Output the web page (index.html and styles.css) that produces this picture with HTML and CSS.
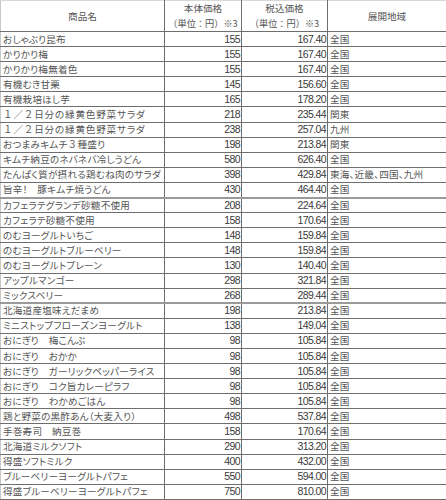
FILE: index.html
```html
<!DOCTYPE html>
<html lang="ja">
<head>
<meta charset="utf-8">
<title>商品一覧</title>
<link rel="stylesheet" href="styles.css">
</head>
<body>
<table class="sheet">
  <colgroup>
    <col class="c-name">
    <col class="c-price">
    <col class="c-tax">
    <col class="c-area">
  </colgroup>
  <thead>
    <tr class="head">
      <th>商品名</th>
      <th><span class="l1">本体価格</span><span class="l2">（単位：円）※3</span></th>
      <th><span class="l1">税込価格</span><span class="l2">（単位：円）※3</span></th>
      <th>展開地域</th>
    </tr>
  </thead>
  <tbody>
    <tr><td>おしゃぶり昆布</td><td class="num">155</td><td class="num">167.40</td><td>全国</td></tr>
    <tr><td>かりかり梅</td><td class="num">155</td><td class="num">167.40</td><td>全国</td></tr>
    <tr><td>かりかり梅無着色</td><td class="num">155</td><td class="num">167.40</td><td>全国</td></tr>
    <tr><td>有機むき甘栗</td><td class="num">145</td><td class="num">156.60</td><td>全国</td></tr>
    <tr><td>有機栽培ほし芋</td><td class="num">165</td><td class="num">178.20</td><td>全国</td></tr>
    <tr><td class="wide"><span class="fw">１／２</span>日分の緑黄色野菜サラダ</td><td class="num">218</td><td class="num">235.44</td><td>関東</td></tr>
    <tr><td class="wide"><span class="fw">１／２</span>日分の緑黄色野菜サラダ</td><td class="num">238</td><td class="num">257.04</td><td>九州</td></tr>
    <tr><td>おつまみキムチ<span class="fw">３</span>種盛り</td><td class="num">198</td><td class="num">213.84</td><td>関東</td></tr>
    <tr><td>キムチ納豆のネバネバ冷しうどん</td><td class="num">580</td><td class="num">626.40</td><td>全国</td></tr>
    <tr><td>たんぱく質が摂れる鶏むね肉のサラダ</td><td class="num">398</td><td class="num">429.84</td><td>東海、近畿、四国、九州</td></tr>
    <tr><td>旨辛！　豚キムチ焼うどん</td><td class="num">430</td><td class="num">464.40</td><td>全国</td></tr>
    <tr class="thick"><td>カフェラテグランデ砂糖不使用</td><td class="num">208</td><td class="num">224.64</td><td>全国</td></tr>
    <tr><td>カフェラテ砂糖不使用</td><td class="num">158</td><td class="num">170.64</td><td>全国</td></tr>
    <tr><td>のむヨーグルトいちご</td><td class="num">148</td><td class="num">159.84</td><td>全国</td></tr>
    <tr><td>のむヨーグルトブルーベリー</td><td class="num">148</td><td class="num">159.84</td><td>全国</td></tr>
    <tr><td>のむヨーグルトプレーン</td><td class="num">130</td><td class="num">140.40</td><td>全国</td></tr>
    <tr><td>アップルマンゴー</td><td class="num">298</td><td class="num">321.84</td><td>全国</td></tr>
    <tr><td>ミックスベリー</td><td class="num">268</td><td class="num">289.44</td><td>全国</td></tr>
    <tr class="thick"><td>北海道産塩味えだまめ</td><td class="num">198</td><td class="num">213.84</td><td>全国</td></tr>
    <tr><td>ミニストップフローズンヨーグルト</td><td class="num">138</td><td class="num">149.04</td><td>全国</td></tr>
    <tr><td>おにぎり　梅こんぶ</td><td class="num">98</td><td class="num">105.84</td><td>全国</td></tr>
    <tr><td>おにぎり　おかか</td><td class="num">98</td><td class="num">105.84</td><td>全国</td></tr>
    <tr><td>おにぎり　ガーリックペッパーライス</td><td class="num">98</td><td class="num">105.84</td><td>全国</td></tr>
    <tr><td>おにぎり　コク旨カレーピラフ</td><td class="num">98</td><td class="num">105.84</td><td>全国</td></tr>
    <tr><td>おにぎり　わかめごはん</td><td class="num">98</td><td class="num">105.84</td><td>全国</td></tr>
    <tr><td>鶏と野菜の黒酢あん（大麦入り）</td><td class="num">498</td><td class="num">537.84</td><td>全国</td></tr>
    <tr><td>手巻寿司　納豆巻</td><td class="num">158</td><td class="num">170.64</td><td>全国</td></tr>
    <tr><td>北海道ミルクソフト</td><td class="num">290</td><td class="num">313.20</td><td>全国</td></tr>
    <tr><td>得盛ソフトミルク</td><td class="num">400</td><td class="num">432.00</td><td>全国</td></tr>
    <tr><td>ブルーベリーヨーグルトパフェ</td><td class="num">550</td><td class="num">594.00</td><td>全国</td></tr>
    <tr><td>得盛ブルーベリーヨーグルトパフェ</td><td class="num">750</td><td class="num">810.00</td><td>全国</td></tr>
  </tbody>
</table>
</body>
</html>
```
FILE: styles.css
```css
html, body {
  margin: 0;
  padding: 0;
  background: #ffffff;
}

.sheet {
  width: 446px;
  table-layout: fixed;
  border-collapse: collapse;
  font-family: "Noto Sans CJK JP", "Noto Sans", sans-serif;
  font-feature-settings: "palt";
  font-size: 9.6px;
  letter-spacing: 0.2px;
  color: #555555;
}

.c-name { width: 164px; }
.c-price { width: 77px; }
.c-tax { width: 86px; }
.c-area { width: 119px; }

.sheet th,
.sheet td {
  border: 1px solid #6e6e6e;
  padding: 0 0 0 2px;
  line-height: 13px;
  white-space: nowrap;
  overflow: hidden;
  vertical-align: middle;
}

.sheet th:first-child,
.sheet td:first-child {
  border-left-color: #c8c8c8;
}

.sheet th:last-child,
.sheet td:last-child {
  border-right-color: #9a9a9a;
}

.head {
  height: 31px;
}

.head th {
  font-weight: normal;
  text-align: center;
  padding: 0;
  border-top-color: #d8d8d8;
  font-feature-settings: normal;
  letter-spacing: 0;
}

.head .l1,
.head .l2 {
  display: block;
  line-height: 15px;
}

.head .l2 {
  font-size: 9.2px;
}

.sheet td .fw {
  font-feature-settings: normal;
}

.sheet td.wide {
  letter-spacing: 0.8px;
}

.sheet tbody tr {
  height: 15.1px;
}

.sheet td.num {
  text-align: right;
  padding: 0 1px 0 0;
  font-family: "Liberation Sans", "Noto Sans", sans-serif;
  font-size: 10.5px;
  letter-spacing: -0.6px;
  color: #3a3a3a;
}

.sheet tr.thick td {
  border-top: 2px solid #9a9a9a;
}
```
